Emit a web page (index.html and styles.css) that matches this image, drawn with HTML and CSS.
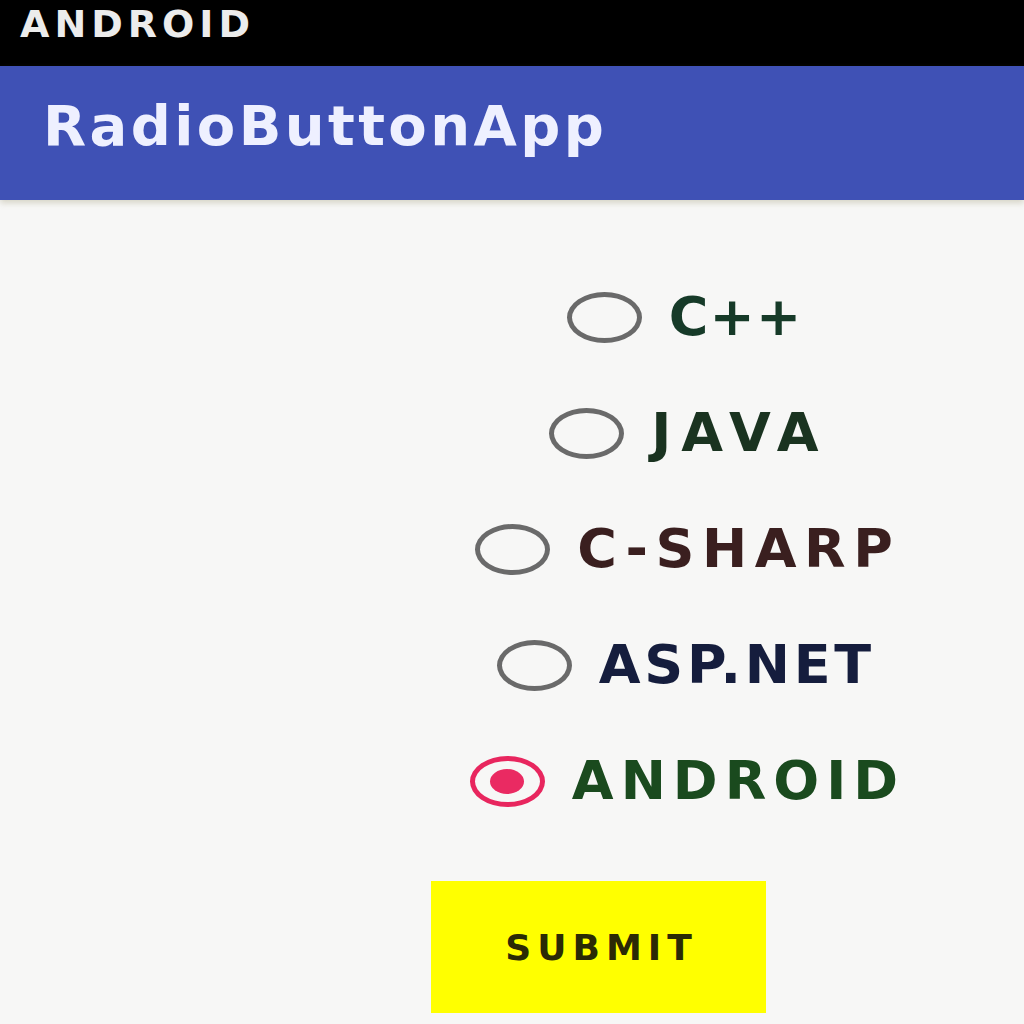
FILE: index.html
```html
<!DOCTYPE html>
<html>
<head>
<meta charset="utf-8">
<title>RadioButtonApp</title>
<link rel="stylesheet" href="styles.css">
</head>
<body>
<div class="status-bar">ANDROID</div>
<header class="app-bar">RadioButtonApp</header>
<main class="content">
  <div class="radio-group">
    <label class="radio-row">
      <span class="radio"></span>
      <span class="label label-cpp">C++</span>
    </label>
    <label class="radio-row">
      <span class="radio"></span>
      <span class="label label-java">JAVA</span>
    </label>
    <label class="radio-row">
      <span class="radio"></span>
      <span class="label label-csharp">C-SHARP</span>
    </label>
    <label class="radio-row">
      <span class="radio"></span>
      <span class="label label-asp">ASP.NET</span>
    </label>
    <label class="radio-row">
      <span class="radio radio-checked"><span class="radio-dot"></span></span>
      <span class="label label-android">ANDROID</span>
    </label>
  </div>
  <div class="button-wrap">
    <button class="submit">SUBMIT</button>
  </div>
</main>
</body>
</html>
```
FILE: styles.css
```css
html, body {
  margin: 0;
  padding: 0;
}
body {
  width: 1024px;
  height: 1024px;
  overflow: hidden;
  background: #f7f7f6;
  font-family: "DejaVu Sans", sans-serif;
}
.status-bar {
  height: 66px;
  box-sizing: border-box;
  background: #000;
  color: #ececec;
  font-size: 38px;
  font-weight: bold;
  line-height: 38px;
  letter-spacing: 5px;
  padding: 5px 0 0 20px;
}
.app-bar {
  height: 134px;
  box-sizing: border-box;
  background: #3f51b5;
  color: #eef0ff;
  font-size: 56px;
  font-weight: bold;
  line-height: 56px;
  letter-spacing: 3.4px;
  padding: 32px 0 0 43px;
  box-shadow: 0 3px 6px rgba(120, 110, 60, 0.25);
  position: relative;
}
.content {
  padding-top: 59px;
}
.radio-group {
  display: flex;
  flex-direction: column;
  padding-left: 344px;
}
.radio-row {
  height: 116px;
  display: flex;
  align-items: center;
  justify-content: center;
  gap: 27px;
}
.radio {
  width: 75px;
  height: 51px;
  box-sizing: border-box;
  border: 5px solid #6a6a6a;
  border-radius: 50%;
  display: flex;
  align-items: center;
  justify-content: center;
  flex: none;
}
.radio-checked {
  border-color: #e8265e;
}
.radio-dot {
  width: 34px;
  height: 25px;
  border-radius: 50%;
  background: #ea2a62;
}
.label {
  font-size: 54px;
  font-weight: bold;
  line-height: 54px;
}
.label-cpp { color: #163a28; letter-spacing: 0.02em; margin-right: -0.02em; }
.label-java { color: #1a3320; letter-spacing: 0.18em; margin-right: -0.18em; }
.label-csharp { color: #3a1f1f; letter-spacing: 0.14em; margin-right: -0.14em; }
.label-asp { color: #151d3d; letter-spacing: 0.07em; margin-right: -0.07em; }
.label-android { color: #1a4a1e; letter-spacing: 0.13em; margin-right: -0.13em; }
.button-wrap {
  padding: 42px 0 0 431px;
}
.submit {
  width: 335px;
  height: 132px;
  border: none;
  border-radius: 0;
  background: #ffff00;
  color: #2b2a05;
  font-family: "DejaVu Sans", sans-serif;
  font-size: 36px;
  font-weight: bold;
  letter-spacing: 6px;
  padding: 0 0 0 6px;
  margin: 0;
}
```
